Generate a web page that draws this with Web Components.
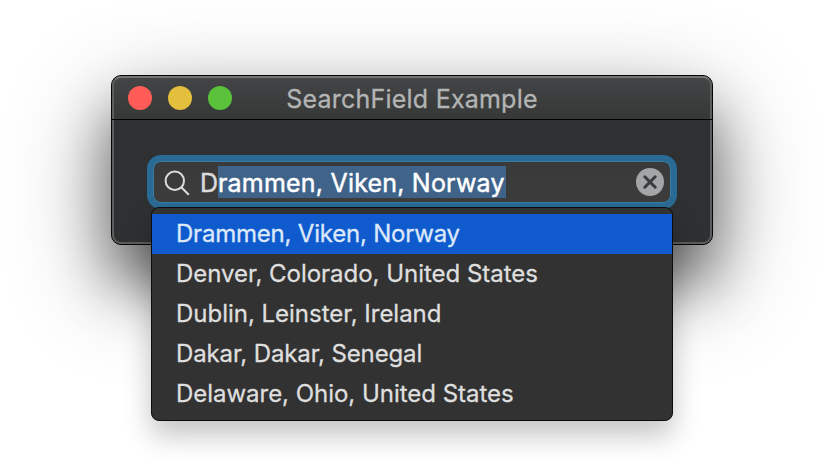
<!DOCTYPE html>
<html lang="en">
<head>
<meta charset="utf-8">
<title>SearchField Example</title>
<style>
html, body { margin: 0; height: 100%; background: #fff; overflow: hidden; }
body { font-family: Inter, Roboto, sans-serif; display: flex; justify-content: center; align-items: flex-start; padding-top: 75px; box-sizing: border-box; }
</style>
</head>
<body>
<app-window heading="SearchField Example">
  <search-field typed="D" completion="rammen, Viken, Norway">
    <suggestion-list>
      <suggestion-item selected style="--track:-0.21px">Drammen, Viken, Norway</suggestion-item>
      <suggestion-item style="--track:-0.03px">Denver, Colorado, United States</suggestion-item>
      <suggestion-item style="--track:-0.02px">Dublin, Leinster, Ireland</suggestion-item>
      <suggestion-item style="--track:-0.13px">Dakar, Dakar, Senegal</suggestion-item>
      <suggestion-item style="--track:-0.03px">Delaware, Ohio, United States</suggestion-item>
    </suggestion-list>
  </search-field>
</app-window>
<script>
class AppWindow extends HTMLElement {
  constructor() {
    super();
    this.attachShadow({ mode: "open" }).innerHTML = `
<style>
:host { display: flex; flex-direction: column; position: relative; box-sizing: border-box; width: 602px; height: 170px;
  border: 1px solid #050505; border-radius: 10px; background: #2f3032;
  box-shadow: 0 38px 56px rgba(0,0,0,.42), 0 34px 100px rgba(0,0,0,.42); }
:host::after { content: ""; position: absolute; inset: 0; border-radius: 9px; border: 2px solid #5b5c5c; border-top-color: #747575; pointer-events: none; }
header { flex: none; display: grid; grid-template-columns: 1fr auto 1fr; align-items: center; height: 43px; padding: 0 16px; box-sizing: border-box;
  border-radius: 9px 9px 0 0; background: linear-gradient(#444547, #363837); }
.line { flex: none; height: 1px; background: #000; position: relative; z-index: 1; }
.lights { display: flex; gap: 16px; }
i { width: 24px; height: 24px; border-radius: 50%; background: #ff5c58; }
i:nth-child(2) { background: #e4be3d; }
i:nth-child(3) { background: #59c13a; }
h1 { margin: 0; font-weight: 400; font-size: 25px; line-height: 32px; letter-spacing: 0.22px; color: #b3b4b4; -webkit-text-stroke: 0.3px #b3b4b4; white-space: nowrap; padding-top: 3px; }
main { padding: 35px; position: relative; z-index: 1; }
</style>
<header><div class="lights"><i></i><i></i><i></i></div><h1></h1></header>
<div class="line"></div>
<main><slot></slot></main>`;
    this.shadowRoot.querySelector("h1").textContent = this.getAttribute("heading");
  }
}
class SearchField extends HTMLElement {
  constructor() {
    super();
    this.attachShadow({ mode: "open" }).innerHTML = `
<style>
:host { display: block; position: relative; }
.box { display: flex; align-items: center; box-sizing: border-box; height: 54px; border-radius: 14px; border: 6px solid #2a6b96;
  background: linear-gradient(#39393a, #3d3d3e) padding-box, #2a6b96 border-box; box-shadow: inset 0 0 0 1px #387da8; padding: 0 7px 0 11px; }
svg { flex: none; display: block; }
.glass { margin-top: 2px; }
.text { flex: 1; display: flex; margin-left: 10px; font-size: 25px; color: #dddcdc; white-space: pre; -webkit-text-stroke: 0.45px currentColor; }
.typed { width: 18px; }
.typed, .sel span { display: block; padding-top: 2px; height: 30px; line-height: 30px; }
.sel { background: #40638a; color: #fff; letter-spacing: 0.2px; width: 288px; }
::slotted(suggestion-list) { position: absolute; left: 4px; top: 52px; }
</style>
<div class="box">
<svg class="glass" width="26" height="26" viewBox="0 0 26 26" fill="none" stroke="#dcdcdc" stroke-width="2"><circle cx="10.8" cy="10.7" r="9.2"/><path d="M17.3 17.3L24.8 24.8"/></svg>
<div class="text"><span class="typed"></span><div class="sel"><span></span></div></div>
<svg width="28" height="28" viewBox="0 0 28 28"><circle cx="14" cy="14" r="14" fill="#a3a5a6"/><path d="M8.8 8.8L19.2 19.2M19.2 8.8L8.8 19.2" stroke="#3a3b3c" stroke-width="3" stroke-linecap="round"/></svg>
</div>
<slot></slot>`;
    this.shadowRoot.querySelector(".typed").textContent = this.getAttribute("typed");
    this.shadowRoot.querySelector(".sel span").textContent = this.getAttribute("completion");
  }
}
class SuggestionList extends HTMLElement {
  constructor() {
    super();
    this.attachShadow({ mode: "open" }).innerHTML = `
<style>
:host { display: block; box-sizing: border-box; width: 522px; height: 214px; padding: 6px 0; border: 1px solid #0c0c0c; border-radius: 8px; background: #323232;
  box-shadow: 0 14px 28px rgba(0,0,0,.24); }
</style>
<slot></slot>`;
  }
}
class SuggestionItem extends HTMLElement {
  constructor() {
    super();
    this.attachShadow({ mode: "open" }).innerHTML = `
<style>
:host { display: flex; align-items: center; box-sizing: border-box; height: 40px; padding: 0 0 2px 24px; font-size: 24px; letter-spacing: var(--track, 0px); color: #dfdfdf; -webkit-text-stroke: 0.3px currentColor; white-space: nowrap; }
:host([selected]) { background: #0f5bce; color: #dde8f9; }
</style>
<span><slot></slot></span>`;
  }
}
customElements.define("suggestion-item", SuggestionItem);
customElements.define("suggestion-list", SuggestionList);
customElements.define("search-field", SearchField);
customElements.define("app-window", AppWindow);
</script>
</body>
</html>
